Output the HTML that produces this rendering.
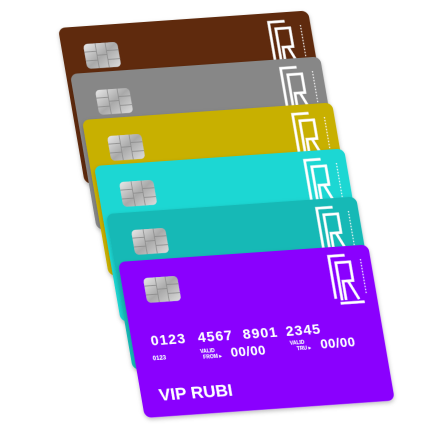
<!DOCTYPE html>
<html><head><meta charset="utf-8"><style>
html,body{margin:0;padding:0;background:#fff;width:430px;height:430px;overflow:hidden}
svg{display:block}
text{font-family:"Liberation Sans",sans-serif;fill:#fff;font-weight:bold}
</style></head><body>
<svg width="430" height="430" viewBox="0 0 430 430">
<defs>
<linearGradient id="chip" x1="0" y1="0" x2="1" y2="1">
<stop offset="0" stop-color="#e8e8e8"/><stop offset="0.5" stop-color="#a9a9a9"/><stop offset="1" stop-color="#dcdcdc"/>
</linearGradient>
<filter id="sh" x="-10%" y="-10%" width="130%" height="130%"><feDropShadow dx="0" dy="2" stdDeviation="2" flood-color="#000" flood-opacity="0.25"/></filter>
<g id="chipg">
<rect x="22" y="18" width="34" height="25" rx="4" fill="url(#chip)"/>
<path d="M22 26h12M22 35h12M44 26h12M44 35h12M34 18v25M44 18v25M34 30h10" stroke="#8d8d8d" stroke-width="0.8" fill="none"/>
</g>
<g id="logo" fill="none" stroke="#fff" stroke-width="2.6">
<path d="M225 9H209V52"/>
<path d="M213 57H237"/>
<path d="M215 54V16H229V35H219V54"/>
<path d="M224 35L232 54"/>
<path d="M240 14V50" stroke-width="1.2" stroke-dasharray="1.5 1.5" opacity="0.8"/>
</g>
</defs>

<g transform="matrix(1,-0.07,0.17,0.987,58,28)" filter="url(#sh)"><rect width="250" height="158" rx="7" fill="#5e2a09"/><use href="#chipg"/><use href="#logo"/></g>
<g transform="matrix(1,-0.07,0.17,0.987,70,74)" filter="url(#sh)"><rect width="250" height="158" rx="7" fill="#878787"/><use href="#chipg"/><use href="#logo"/></g>
<g transform="matrix(1,-0.07,0.17,0.987,82,120)" filter="url(#sh)"><rect width="250" height="158" rx="7" fill="#c8b000"/><use href="#chipg"/><use href="#logo"/></g>
<g transform="matrix(1,-0.07,0.17,0.987,94,166)" filter="url(#sh)"><rect width="250" height="158" rx="7" fill="#1ed7d3"/><use href="#chipg"/><use href="#logo"/></g>
<g transform="matrix(1,-0.07,0.17,0.987,106,214)" filter="url(#sh)"><rect width="250" height="158" rx="7" fill="#17b9b6"/><use href="#chipg"/><use href="#logo"/></g>
<g transform="matrix(1,-0.07,0.17,0.987,118,262)" filter="url(#sh)"><rect width="250" height="158" rx="7" fill="#8a00fe"/><use href="#chipg"/><use href="#logo"/>
<text x="19" y="86" font-size="14" letter-spacing="1">0123</text>
<text x="66" y="86" font-size="14" letter-spacing="1">4567</text>
<text x="111" y="86" font-size="14" letter-spacing="1">8901</text>
<text x="154" y="86" font-size="14" letter-spacing="1">2345</text>
<text x="18" y="101" font-size="6">0123</text>
<text x="66" y="97" font-size="5">VALID</text>
<text x="68" y="103" font-size="5">FROM ▸</text>
<text x="96" y="103" font-size="13" letter-spacing="0.5">00/00</text>
<text x="156" y="95" font-size="5">VALID</text>
<text x="162" y="101" font-size="5">TRU ▸</text>
<text x="186" y="101" font-size="13" letter-spacing="0.5">00/00</text>
<text x="18" y="142" font-size="17">VIP RUBI</text>
</g>
</svg>
</body></html>
